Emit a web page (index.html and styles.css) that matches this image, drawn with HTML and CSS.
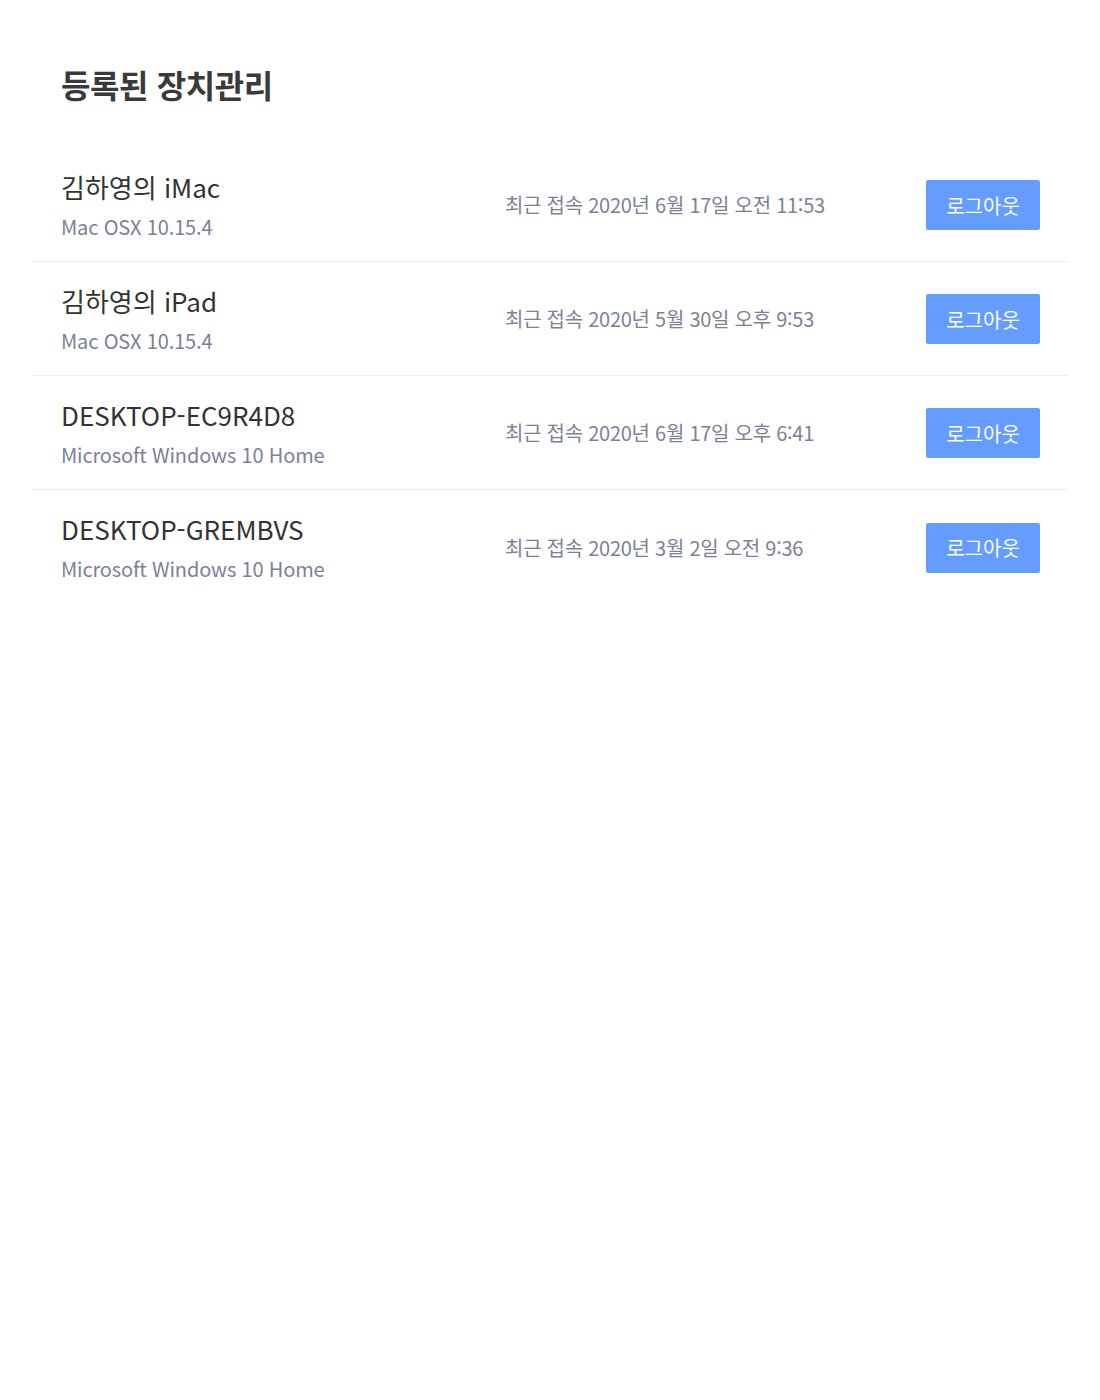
FILE: index.html
```html
<!DOCTYPE html>
<html lang="ko">
<head>
<meta charset="utf-8">
<link rel="stylesheet" href="styles.css">
</head>
<body>
<div class="page">
  <h1 class="title">등록된 장치관리</h1>
  <ul class="list">
    <li class="row">
      <div class="info">
        <div class="name">김하영의 iMac</div>
        <div class="os">Mac OSX 10.15.4</div>
      </div>
      <div class="date">최근 접속 2020년 6월 17일 오전 11:53</div>
      <button class="btn">로그아웃</button>
    </li>
    <li class="row">
      <div class="info">
        <div class="name">김하영의 iPad</div>
        <div class="os">Mac OSX 10.15.4</div>
      </div>
      <div class="date">최근 접속 2020년 5월 30일 오후 9:53</div>
      <button class="btn">로그아웃</button>
    </li>
    <li class="row">
      <div class="info">
        <div class="name">DESKTOP-EC9R4D8</div>
        <div class="os">Microsoft Windows 10 Home</div>
      </div>
      <div class="date">최근 접속 2020년 6월 17일 오후 6:41</div>
      <button class="btn">로그아웃</button>
    </li>
    <li class="row">
      <div class="info">
        <div class="name">DESKTOP-GREMBVS</div>
        <div class="os">Microsoft Windows 10 Home</div>
      </div>
      <div class="date">최근 접속 2020년 3월 2일 오전 9:36</div>
      <button class="btn">로그아웃</button>
    </li>
  </ul>
</div>
</body>
</html>
```

FILE: styles.css
```css
* { box-sizing: border-box; }
html, body { margin: 0; padding: 0; background: #fff; }
body {
  font-family: "Noto Sans CJK KR", "Noto Sans", sans-serif;
  color: #333;
}
.page {
  padding: 58px 32px 0 32px;
}
.title {
  margin: 0 0 38px 29px;
  font-size: 32px;
  line-height: 52px;
  font-weight: 700;
  letter-spacing: -0.4px;
  color: #3a3a3a;
}
.list {
  list-style: none;
  margin: 0;
  padding: 0;
}
.row {
  display: flex;
  align-items: center;
  height: 114px;
  padding: 1px 28px 0 29px;
  border-bottom: 1px solid #ebedf3;
}
.row:last-child { border-bottom: none; }
.info {
  width: 444px;
  flex: none;
}
.name {
  font-size: 26px;
  line-height: 36px;
  color: #333;
}
.os {
  margin-top: 7px;
  font-size: 20px;
  line-height: 30px;
  letter-spacing: -0.16px;
  color: #7b8296;
}
.date {
  flex: 1;
  font-size: 20px;
  line-height: 30px;
  letter-spacing: -0.26px;
  color: #7b8296;
}
.btn {
  width: 114px;
  height: 50px;
  border: none;
  border-radius: 2px;
  background: #649dff;
  color: #fff;
  font-family: inherit;
  font-size: 20px;
  padding: 0;
}
```
